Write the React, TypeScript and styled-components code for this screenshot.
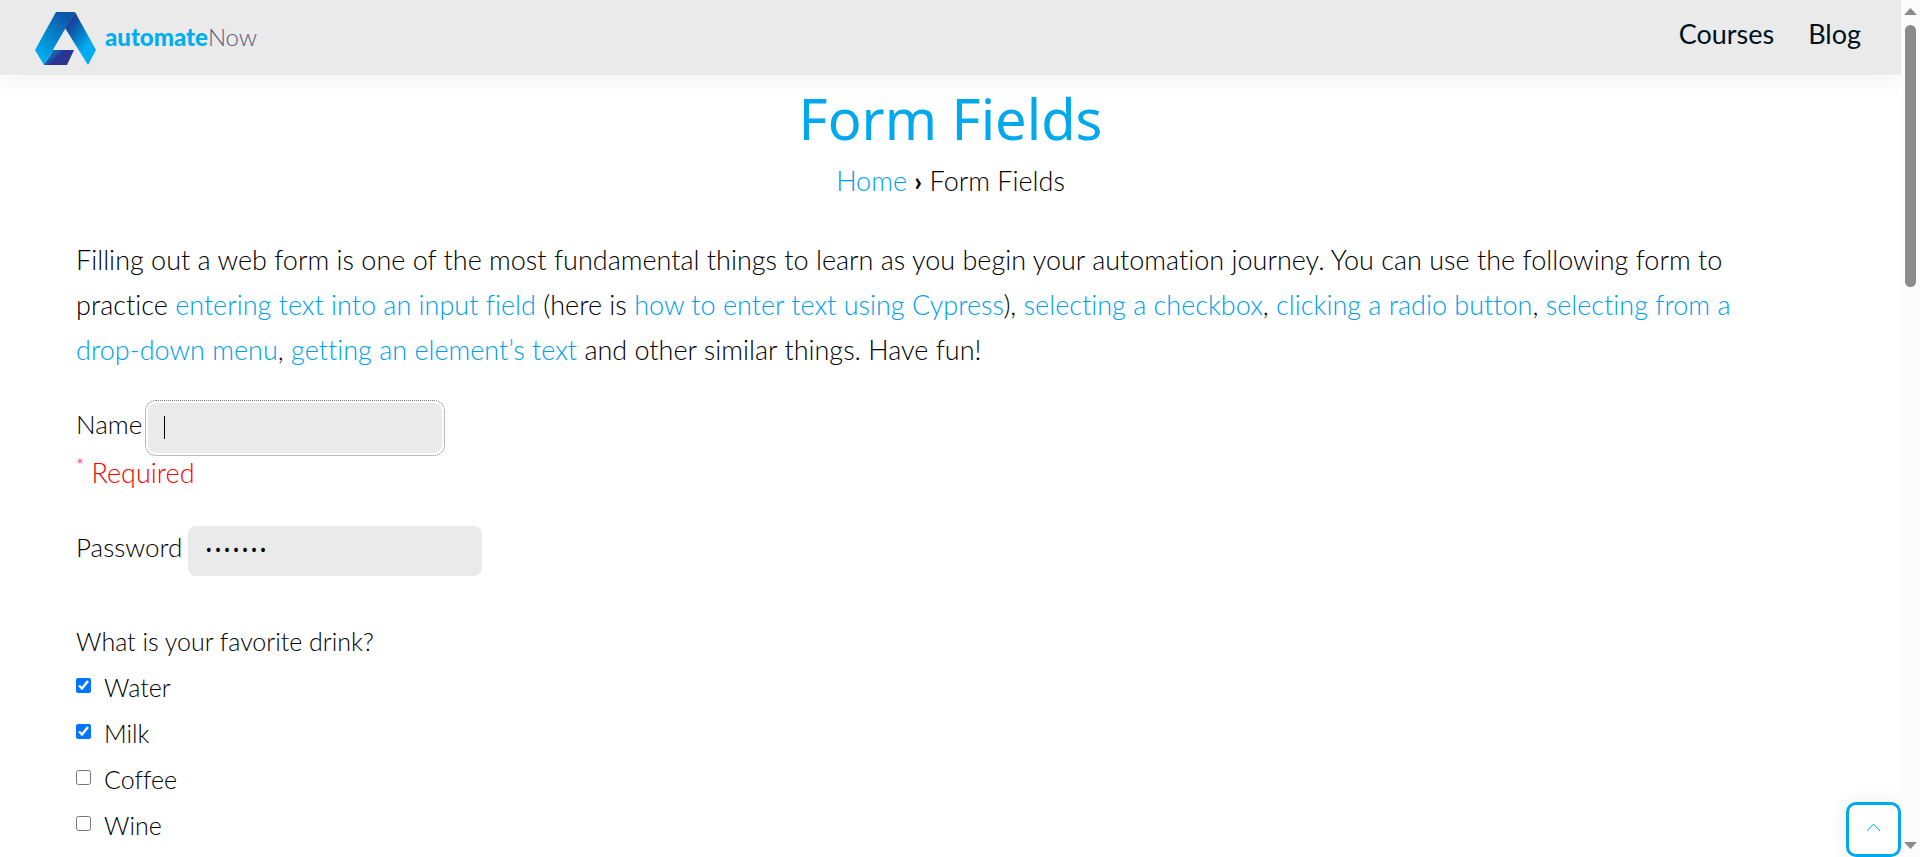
import React from "react";
import styled, { createGlobalStyle, css } from "styled-components";

const blue = "#00a8ee";
const grey = "#eaeaea";

const GlobalStyle = createGlobalStyle`
  * { box-sizing: border-box; }
  body {
    margin: 0;
    background: #fff;
    color: #000;
    font-family: Lato, "Noto Sans", sans-serif;
    font-size: 27px;
    font-weight: 300;
    font-variant-ligatures: none;
  }
`;

const Shell = styled.div`
  display: flex;
  height: 100vh;
  overflow: hidden;
`;

const Page = styled.div`
  position: relative;
  flex: 1;
  min-width: 0;
  overflow: hidden;
`;

const Header = styled.header`
  display: flex;
  align-items: center;
  justify-content: space-between;
  height: 75px;
  padding: 0 40px 0 35px;
  background: ${grey};
  box-shadow: 0 10px 20px rgba(0, 0, 0, 0.04);
`;

const Brand = styled.a`
  display: flex;
  align-items: center;
  gap: 9px;
  color: #5b5a80;
  font-size: 24px;
  font-weight: 300;
  text-decoration: none;

  svg { display: block; }
  span { padding-bottom: 2px; }
  b { color: #00aeef; font-weight: 900; }
`;

const Nav = styled.nav`
  display: flex;
  gap: 34px;
  padding-bottom: 8px;
`;

const NavLink = styled.a`
  color: #00131c;
  font-size: 27px;
  font-weight: 400;
  text-decoration: none;
`;

const Main = styled.main`
  padding: 11px 4% 0;
`;

const Title = styled.h1`
  margin: 0;
  color: ${blue};
  font: 400 56px/64px "Noto Sans", sans-serif;
  text-align: center;
`;

const Crumbs = styled.nav`
  margin-top: 13px;
  line-height: 36px;
  text-align: center;

  b { font-weight: 700; }
`;

const Link = styled.a`
  color: #009fec;
  text-decoration: none;
`;

const NoBreak = styled.span`
  white-space: nowrap;
`;

const Intro = styled.p`
  margin: 38px 0 0;
  padding-right: 20px;
  line-height: 45px;
`;

const Field = styled.div`
  display: flex;
  align-items: center;
  gap: 6px;
`;

const Label = styled.label`
  padding-bottom: 8px;
  font-size: 26px;
`;

const InputWrap = styled.span<{ $caret?: boolean }>`
  position: relative;
  display: flex;

  ${(p) =>
    p.$caret &&
    css`
      &::after {
        content: "";
        position: absolute;
        left: 16px;
        top: 13px;
        width: 1px;
        height: 23px;
        background: #000;
      }
    `}
`;

const Input = styled.input`
  width: 294px;
  height: 50px;
  padding: 0 16px 4px;
  border: 0;
  border-radius: 8px;
  background: ${grey};
  color: #000;
  caret-color: transparent;
  font: 300 24px "Open Sans", sans-serif;
  outline: 0;

  &:focus {
    outline: 1px dotted #777;
    outline-offset: 2px;
  }
`;

const Form = styled.form`
  margin-top: 31px;
`;

const Required = styled.p`
  margin: 0 0 34px;
  color: #f00;
  line-height: 39px;

  sup { font-size: 19px; line-height: 0; }
`;

const Drinks = styled.fieldset`
  margin: 42px 0 0;
  padding: 0;
  border: 0;
`;

const Legend = styled.legend`
  padding: 0;
  font-size: 25px;
  line-height: 46px;
`;

const Option = styled.label`
  display: flex;
  gap: 13px;
  font-size: 25px;
  line-height: 46px;
`;

const Check = styled.input`
  width: 15px;
  height: 15px;
  margin: 14px 0 0;
`;

const ToTop = styled.button`
  position: absolute;
  right: 0;
  bottom: 0;
  display: grid;
  place-items: center;
  width: 55px;
  height: 55px;
  padding: 0 0 4px;
  border: 3px solid ${blue};
  border-radius: 10px;
  background: #fff;
  box-shadow: 0 0 20px rgba(0, 0, 0, 0.08);
`;

const Rail = styled.div`
  display: flex;
  flex-direction: column;
  align-items: center;
  justify-content: space-between;
  width: 19px;
  padding: 8px 0;
  background: #fcfcfc;
`;

const Thumb = styled.div`
  width: 11px;
  height: 262px;
  margin: 10px 0 auto;
  border-radius: 6px;
  background: #8b8b8b;
`;

const Logo = () => (
  <svg width="61" height="54" viewBox="35 10 61 54" aria-hidden="true">
    <defs>
      <linearGradient id="l" x1="0.8" y1="0.1" x2="0.3" y2="0.95">
        <stop offset="0" stopColor="#0a58a8" />
        <stop offset="1" stopColor="#00aeef" />
      </linearGradient>
      <linearGradient id="r" x1="0.1" y1="0.1" x2="0.7" y2="0.9">
        <stop offset="0" stopColor="#2b2f8d" />
        <stop offset="0.3" stopColor="#0b5cad" />
        <stop offset="0.8" stopColor="#00aeef" />
      </linearGradient>
      <linearGradient id="b" x1="0.1" y1="0.2" x2="0.9" y2="0.6">
        <stop offset="0" stopColor="#16407f" />
        <stop offset="0.2" stopColor="#0f6fb8" />
        <stop offset="0.5" stopColor="#2a3593" />
      </linearGradient>
    </defs>
    <path d="M75 11 96 49 88 64 65 27Z" fill="url(#r)" />
    <path d="M56 11H75L44 64 35 49Z" fill="url(#l)" />
    <path d="M53 49H74L67 64H44Z" fill="url(#b)" />
  </svg>
);

const Arrow = ({ down }: { down?: boolean }) => (
  <svg width="13" height="7" viewBox="0 0 13 7" aria-hidden="true">
    <path d={down ? "M0 0H13L6.500 7Z" : "M0 7H13L6.500 0Z"} fill="#8b8b8b" />
  </svg>
);

const drinks = [
  { name: "Water", on: true },
  { name: "Milk", on: true },
  { name: "Coffee", on: false },
  { name: "Wine", on: false },
];

export default function App() {
  return (
    <Shell>
      <GlobalStyle />
      <Page>
        <Header>
          <Brand href="#">
            <Logo />
            <span><b>automate</b>Now</span>
          </Brand>
          <Nav>
            <NavLink href="#">Courses</NavLink>
            <NavLink href="#">Blog</NavLink>
          </Nav>
        </Header>
        <Main>
          <Title>Form Fields</Title>
          <Crumbs>
            <Link href="#">Home</Link> <b>›</b> Form Fields
          </Crumbs>
          <Intro>
            Filling out a web form is one of the most fundamental things to learn as you begin your
            automation journey. You can use the following form to practice{" "}
            <Link href="#">entering text into an input field</Link> (here is{" "}
            <Link href="#">how to enter text using Cypress</Link>),{" "}
            <Link href="#">selecting a checkbox</Link>, <Link href="#">clicking a radio button</Link>,{" "}
            <Link href="#">selecting from a <NoBreak>drop-down</NoBreak> menu</Link>,{" "}
            <Link href="#">getting an element’s text</Link> and other similar things. Have fun!
          </Intro>
          <Form>
            <Field>
              <Label htmlFor="name">Name</Label>
              <InputWrap $caret>
                <Input id="name" type="text" autoFocus />
              </InputWrap>
            </Field>
            <Required><sup>*</sup> Required</Required>
            <Field>
              <Label htmlFor="password">Password</Label>
              <InputWrap>
                <Input id="password" type="password" defaultValue="letmein" />
              </InputWrap>
            </Field>
            <Drinks>
              <Legend>What is your favorite drink?</Legend>
              {drinks.map((d) => (
                <Option key={d.name}>
                  <Check type="checkbox" defaultChecked={d.on} />
                  {d.name}
                </Option>
              ))}
            </Drinks>
          </Form>
        </Main>
        <ToTop type="button" aria-label="Back to top">
          <svg width="15" height="9" viewBox="0 0 15 9" aria-hidden="true">
            <path d="M1 8 7.500 1 14 8" fill="none" stroke={blue} />
          </svg>
        </ToTop>
      </Page>
      <Rail aria-hidden="true">
        <Arrow />
        <Thumb />
        <Arrow down />
      </Rail>
    </Shell>
  );
}
